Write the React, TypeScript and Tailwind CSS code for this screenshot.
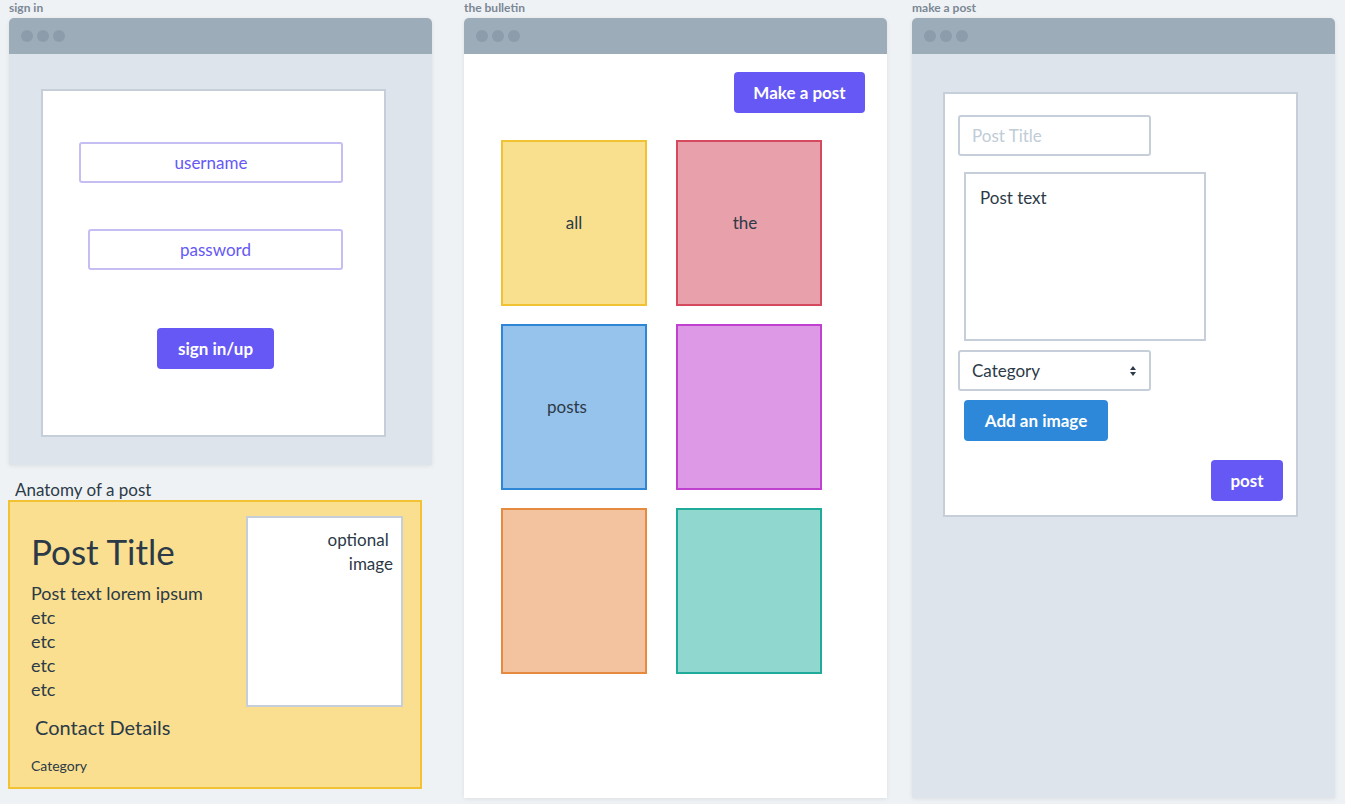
import React from 'react';

const font = { fontFamily: 'Lato, "Noto Sans", sans-serif' };

const WindowBar: React.FC = () => (
  <div className="h-[36px] bg-[#9dacb9] rounded-t-[5px] flex items-center pl-[12px] gap-[4px]">
    <span className="w-[12px] h-[12px] rounded-full bg-[#8c9cab]" />
    <span className="w-[12px] h-[12px] rounded-full bg-[#8c9cab]" />
    <span className="w-[12px] h-[12px] rounded-full bg-[#8c9cab]" />
  </div>
);

const Label: React.FC<{ text: string }> = ({ text }) => (
  <div className="h-[18px] pt-[1px] text-[12px] leading-[14px] font-bold text-[#7b8794]">{text}</div>
);

const tiles = [
  { text: 'all', cls: 'bg-[#f9e08f] border-[#f1c232]' },
  { text: 'the', cls: 'bg-[#e8a0ab] border-[#d5495e] pr-[8px]' },
  { text: 'posts', cls: 'bg-[#96c3ec] border-[#2d86d6] pr-[14px]' },
  { text: '', cls: 'bg-[#dd98e6] border-[#c040cf]' },
  { text: '', cls: 'bg-[#f3c29e] border-[#e58a3e]' },
  { text: '', cls: 'bg-[#8fd7cf] border-[#1faa99]' },
];

export default function App() {
  return (
    <div className="w-[1345px] h-[804px] bg-[#eef2f5] flex pl-[9px] text-[#2c3a47] overflow-hidden" style={font}>
      {/* sign in column */}
      <div className="w-[423px]">
        <Label text="sign in" />
        <div className="h-[447px] flex flex-col shadow-[0_1px_4px_rgba(0,0,0,0.08)] rounded-t-[5px]">
          <WindowBar />
          <div className="flex-1 bg-[#dee4ec] pt-[35px] pl-[32px]">
            <div className="w-[345px] h-[348px] bg-white border-2 border-[#c6cfd9] pt-[51px]">
              <div className="ml-[36px] w-[264px] h-[41px] border-2 border-[#c4bef3] rounded-[3px] flex items-center justify-center text-[17px] text-[#6558f5]">
                username
              </div>
              <div className="ml-[45px] mt-[46px] w-[255px] h-[41px] border-2 border-[#c4bef3] rounded-[3px] flex items-center justify-center text-[17px] text-[#6558f5]">
                password
              </div>
              <button className="block ml-[114px] mt-[58px] w-[117px] h-[41px] bg-[#6558f5] rounded-[4px] text-white font-bold text-[17px]">
                sign in/up
              </button>
            </div>
          </div>
        </div>
        <div className="mt-[14px] h-[21px] pl-[6px] text-[17px] leading-[21px] text-[#2c3a47]">Anatomy of a post</div>
        <div className="-ml-[1px] w-[414px] h-[289px] bg-[#f9df8f] border-2 border-[#f2c232] flex">
          <div className="flex-1 pl-[21px] pt-[29px]">
            <div className="text-[35px] leading-[40px] text-[#2c3a47]">Post Title</div>
            <div className="mt-[10px] text-[18px] leading-[24px]">
              <div>Post text lorem ipsum</div>
              <div>etc</div>
              <div>etc</div>
              <div>etc</div>
              <div>etc</div>
            </div>
            <div className="mt-[14px] pl-[4px] text-[20px] leading-[24px]">Contact Details</div>
            <div className="mt-[18px] text-[14px] leading-[18px]">Category</div>
          </div>
          <div className="mt-[14px] mr-[17px] w-[157px] h-[191px] bg-white border-2 border-[#c6cfd9] pt-[10px] pr-[8px] text-right text-[17px] leading-[24px]">
            optional&nbsp;
            <br />
            image
          </div>
        </div>
      </div>

      {/* bulletin column */}
      <div className="w-[423px] ml-[32px]">
        <Label text="the bulletin" />
        <div className="h-[780px] flex flex-col shadow-[0_1px_4px_rgba(0,0,0,0.08)] rounded-t-[5px]">
          <WindowBar />
          <div className="flex-1 bg-white">
            <div className="flex justify-end pt-[18px] pr-[22px]">
              <button className="w-[131px] h-[41px] bg-[#6558f5] rounded-[4px] text-white font-bold text-[17px]">
                Make a post
              </button>
            </div>
            <div className="grid grid-cols-[146px_146px] gap-x-[29px] gap-y-[18px] pl-[37px] mt-[27px]">
              {tiles.map((t, i) => (
                <div key={i} className={`h-[166px] border-2 flex items-center justify-center text-[17px] ${t.cls}`}>
                  {t.text}
                </div>
              ))}
            </div>
          </div>
        </div>
      </div>

      {/* make a post column */}
      <div className="w-[423px] ml-[25px]">
        <Label text="make a post" />
        <div className="h-[780px] flex flex-col shadow-[0_1px_4px_rgba(0,0,0,0.08)] rounded-t-[5px]">
          <WindowBar />
          <div className="flex-1 bg-[#dee4ec] pt-[38px] pl-[31px]">
            <div className="w-[355px] h-[425px] bg-white border-2 border-[#c6cfd9] pt-[21px] pl-[13px] pr-[13px]">
              <div className="w-[193px] h-[41px] border-2 border-[#c6cfd9] rounded-[3px] flex items-center pl-[12px] text-[17px] text-[#c0ccd6]">
                Post Title
              </div>
              <div className="ml-[6px] mt-[16px] w-[242px] h-[169px] border-2 border-[#c6cfd9] pl-[14px] pt-[12px] text-[17px] leading-[24px]">
                Post text
              </div>
              <div className="mt-[9px] w-[193px] h-[41px] border-2 border-[#c6cfd9] rounded-[3px] flex items-center justify-between pl-[12px] pr-[12px] text-[17px]">
                <span>Category</span>
                <svg width="8" height="12" viewBox="0 0 8 12">
                  <path d="M4 1 L7 5 H1 Z" fill="#2c3a47" />
                  <path d="M4 11 L7 7 H1 Z" fill="#2c3a47" />
                </svg>
              </div>
              <button className="block ml-[6px] mt-[9px] w-[144px] h-[41px] bg-[#2d88d9] rounded-[4px] text-white font-bold text-[17px]">
                Add an image
              </button>
              <div className="flex justify-end mt-[19px]">
                <button className="w-[72px] h-[41px] bg-[#6558f5] rounded-[4px] text-white font-bold text-[17px]">
                  post
                </button>
              </div>
            </div>
          </div>
        </div>
      </div>
    </div>
  );
}
